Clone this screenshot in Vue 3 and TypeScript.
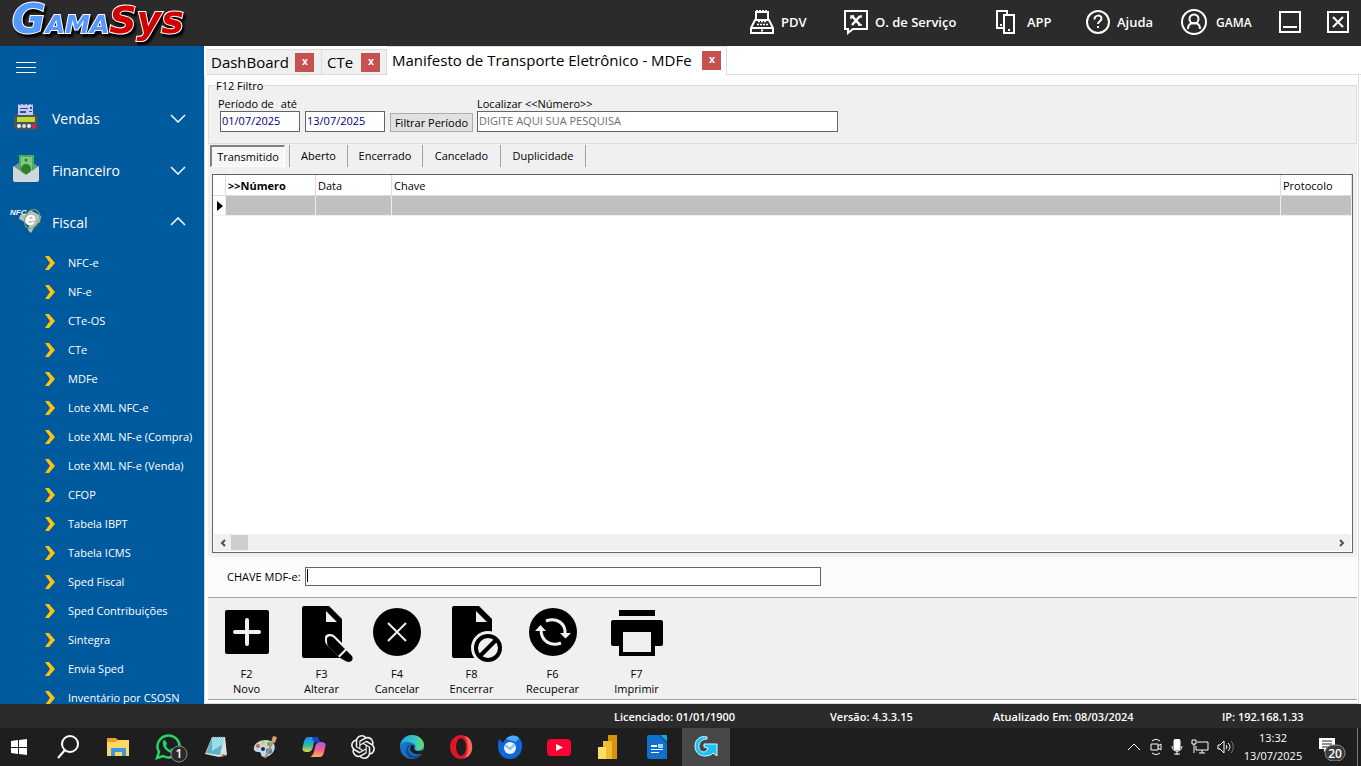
<script setup lang="ts">
import { ref } from 'vue'

interface NavItem { id: string; label: string; width: string }
interface Tool { id: string; key: string; label: string }

const nav: NavItem[] = [
  { id: 'pdv', label: 'PDV', width: 'w-pdv' },
  { id: 'service', label: 'O. de Serviço', width: 'w-service' },
  { id: 'app', label: 'APP', width: 'w-app' },
  { id: 'help', label: 'Ajuda', width: 'w-help' },
  { id: 'user', label: 'GAMA', width: 'w-user' },
]
const groups = [
  { id: 'vendas', label: 'Vendas', open: false },
  { id: 'financeiro', label: 'Financeiro', open: false },
  { id: 'fiscal', label: 'Fiscal', open: true },
]
const links: string[] = [
  'NFC-e', 'NF-e', 'CTe-OS', 'CTe', 'MDFe', 'Lote XML NFC-e', 'Lote XML NF-e (Compra)',
  'Lote XML NF-e (Venda)', 'CFOP', 'Tabela IBPT', 'Tabela ICMS', 'Sped Fiscal',
  'Sped Contribuições', 'Sintegra', 'Envia Sped', 'Inventário por CSOSN',
]
const pages = [
  { label: 'DashBoard', cls: 'tab-dash' },
  { label: 'CTe', cls: 'tab-cte' },
  { label: 'Manifesto de Transporte Eletrônico - MDFe', cls: 'active' },
]
const filters = [
  { label: 'Transmitido', cls: 'pressed' },
  { label: 'Aberto', cls: 'f-aberto' },
  { label: 'Encerrado', cls: 'f-encerrado' },
  { label: 'Cancelado', cls: 'f-cancelado' },
  { label: 'Duplicidade', cls: 'f-duplicidade' },
]
const tools: Tool[] = [
  { id: 'new', key: 'F2', label: 'Novo' },
  { id: 'edit', key: 'F3', label: 'Alterar' },
  { id: 'cancel', key: 'F4', label: 'Cancelar' },
  { id: 'close', key: 'F8', label: 'Encerrar' },
  { id: 'sync', key: 'F6', label: 'Recuperar' },
  { id: 'print', key: 'F7', label: 'Imprimir' },
]
const apps: string[] = [
  'Pesquisar', 'Explorador', 'WhatsApp', 'Bloco de notas', 'Paint', 'Copilot', 'ChatGPT',
  'Edge', 'Opera', 'Thunderbird', 'YouTube', 'Power BI', 'Writer', 'GamaSys',
]
const from = ref('01/07/2025')
const to = ref('13/07/2025')
const search = ref('')
const accessKey = ref('')
</script>

<template>
  <div class="screen">
    <header class="top">
      <svg class="logo" width="200" height="46" viewBox="0 0 200 46" role="img" aria-label="GamaSys">
        <text x="12" y="33"><tspan class="lg">G</tspan><tspan class="la">AMA</tspan><tspan class="ls">Sys</tspan></text>
      </svg>
      <nav class="topnav">
        <button v-for="n in nav" :key="n.id" type="button" :class="['navbtn', n.width]">
          <svg v-if="n.id === 'pdv'" width="26" height="28" viewBox="0 0 26 28" class="line">
            <path d="M7 12V4h12v8M6 12h14l4 8v5H2v-5zM2 20h22" />
            <path d="M7 3h12" stroke-dasharray="2 1" />
            <path d="M9 13.500h9M8 16.500h11" stroke-dasharray="2 1" stroke-width="1.500" />
            <path d="M12 22.500h2" />
          </svg>
          <svg v-else-if="n.id === 'service'" width="26" height="28" viewBox="0 0 26 28" class="line">
            <path d="M2 3h22v18H10l-5 4v-4H2z" />
            <path d="M9 8l8 9M17 8l-8 9" stroke-width="2.500" />
            <path d="M8 11V8h3M15 17h4M18 7v3" stroke-width="1.500" />
          </svg>
          <svg v-else-if="n.id === 'app'" width="26" height="28" viewBox="0 0 26 28" class="line">
            <path d="M8 20H2V3h10v4M9 7h10v18H9z" />
            <path d="M5 17h2M13 22h2" />
          </svg>
          <svg v-else-if="n.id === 'help'" width="26" height="28" viewBox="0 0 26 28" class="line">
            <circle cx="13" cy="14" r="11" />
            <path d="M9.500 11.500c0-5 7-5 7-1 0 3-3.500 2.500-3.500 5.500M13 18v2" />
          </svg>
          <svg v-else width="28" height="28" viewBox="0 0 28 28" class="line">
            <circle cx="14" cy="14" r="12" />
            <circle cx="14" cy="11" r="4.500" />
            <path d="M8 21c0-4 2-6 6-6s6 2 6 6" />
          </svg>
          <span>{{ n.label }}</span>
        </button>
        <button type="button" class="winbtn w-min" aria-label="Minimizar">
          <svg width="22" height="22" viewBox="0 0 22 22" class="line"><path d="M1 1h20v20H1zM4 16h14" /></svg>
        </button>
        <button type="button" class="winbtn" aria-label="Fechar">
          <svg width="22" height="22" viewBox="0 0 22 22" class="line"><path d="M1 1h20v20H1zM6 6l10 10M16 6L6 16" /></svg>
        </button>
      </nav>
    </header>

    <div class="body">
      <aside class="side">
        <button type="button" class="burger" aria-label="Menu"><i></i><i></i><i></i></button>
        <button v-for="g in groups" :key="g.id" type="button" class="group">
          <svg v-if="g.id === 'vendas'" width="32" height="32" viewBox="0 0 32 32">
            <path d="M6 13l3-4h14l3 4v14H4V13z" fill="#455a64" />
            <path d="M4 14h24v12a2 2 0 0 1-2 2H6a2 2 0 0 1-2-2z" fill="#46555e" />
            <path d="M8 2l2 1 2-1 2 1 2-1 2 1 2-1 2 1 1-1v11H8z" fill="#c5cae9" />
            <path d="M10 6h8v1h-8zM10 9h6v2h-6zM19 9h3v1h-3zM20 5h2v2h-2z" fill="#3949ab" />
            <path d="M7 15h18v5H7z" fill="#c6d82e" />
            <circle cx="9" cy="24" r="2" fill="#eee" /><circle cx="14" cy="24" r="2" fill="#ddd" />
            <circle cx="19" cy="24" r="2" fill="#eee" /><circle cx="24" cy="24" r="2" fill="#ff1744" />
          </svg>
          <svg v-else-if="g.id === 'financeiro'" width="32" height="32" viewBox="0 0 32 32">
            <path d="M3 13L16 4l13 9v13H3z" fill="#78909c" />
            <path d="M9 1h15v20H9z" fill="#4caf50" />
            <path d="M11 3h11v15H11z" fill="#81c784" />
            <circle cx="16" cy="15" r="5" fill="#2e7d32" /><circle cx="16" cy="6" r="1.500" fill="#2e7d32" />
            <path d="M3 12l13 9 13-9v14a2 2 0 0 1-2 2H5a2 2 0 0 1-2-2z" fill="#cfd8dc" />
          </svg>
          <svg v-else width="32" height="32" viewBox="0 0 32 32">
            <path d="M10 9l6 0 4-5 4 2 7 4-1 6-5 4-4 7-3-3 1-4-6-5-4-2z" fill="#b9c0c4" />
            <ellipse cx="22" cy="13" rx="7" ry="10" fill="none" stroke="#7cab52" transform="rotate(25 22 13)" />
            <text x="0" y="9" class="nfc">NFC</text>
            <text x="15" y="19" class="nfe">e</text>
          </svg>
          <span>{{ g.label }}</span>
          <svg width="16" height="10" viewBox="0 0 16 10" class="chev">
            <path :d="g.open ? 'M1 8l7-7 7 7' : 'M1 2l7 7 7-7'" />
          </svg>
        </button>
        <a v-for="l in links" :key="l" href="#" class="link">
          <svg width="10" height="14" viewBox="0 0 10 14"><path d="M0 0h4l6 7-6 7H0l5-7z" fill="#ffc20e" /></svg>
          <span>{{ l }}</span>
        </a>
      </aside>

      <main class="work">
        <div class="tabs">
          <div v-for="p in pages" :key="p.label" :class="['tab', p.cls]">
            <span>{{ p.label }}</span>
            <button type="button" :aria-label="'Fechar ' + p.label">
              <svg width="6" height="6" viewBox="0 0 6 6"><path d="M0 0h2l1 2 1-2h2L4 3l2 3H4L3 4 2 6H0l2-3z" fill="#fff" /></svg>
            </button>
          </div>
          <div class="tabs-rest"></div>
        </div>

        <div class="page">
          <fieldset class="filter">
            <legend>F12 Filtro</legend>
            <div class="period">
              <div class="caption"><label for="from">Período de</label><label for="to">até</label></div>
              <div class="fields">
                <input id="from" v-model="from" class="date" type="text" />
                <input id="to" v-model="to" class="date" type="text" />
                <button type="button" class="apply">Filtrar Período</button>
              </div>
            </div>
            <div class="find">
              <label for="find">Localizar &lt;&lt;Número&gt;&gt;</label>
              <input id="find" v-model="search" type="text" placeholder="DIGITE AQUI SUA PESQUISA" />
            </div>
          </fieldset>

          <div class="filters">
            <button v-for="f in filters" :key="f.label" type="button" :class="f.cls">{{ f.label }}</button>
          </div>

          <div class="grid">
            <table>
              <colgroup><col class="c-mark" /><col class="c-num" /><col class="c-date" /><col /><col class="c-prot" /></colgroup>
              <thead>
                <tr><th></th><th class="sorted">&gt;&gt;Número</th><th>Data</th><th>Chave</th><th>Protocolo</th></tr>
              </thead>
              <tbody>
                <tr>
                  <td class="mark"><svg width="6" height="10" viewBox="0 0 6 10"><path d="M0 0l6 5-6 5z" /></svg></td>
                  <td></td><td></td><td></td><td></td>
                </tr>
              </tbody>
            </table>
            <div class="scroll">
              <svg width="6" height="8" viewBox="0 0 6 8"><path d="M5 1L2 4l3 3" /></svg>
              <div class="thumb"></div>
              <svg width="6" height="8" viewBox="0 0 6 8"><path d="M1 1l3 3-3 3" /></svg>
            </div>
          </div>

          <div class="keybar">
            <label for="key">CHAVE MDF-e:</label>
            <div class="keyfield"><input id="key" v-model="accessKey" type="text" /><i class="caret"></i></div>
          </div>

          <div class="tools">
            <button v-for="t in tools" :key="t.id" type="button" :class="'t-' + t.id">
              <svg v-if="t.id === 'new'" width="56" height="56" viewBox="0 0 56 56">
                <rect x="6" y="4" width="44" height="44" rx="2" />
                <path d="M28 14v24M16 26h24" class="cut thick" />
              </svg>
              <svg v-else-if="t.id === 'edit'" width="56" height="56" viewBox="0 0 56 56">
                <path d="M10 0h25l13 13v39H10a2 2 0 0 1-2-2V2a2 2 0 0 1 2-2z" />
                <path d="M32 5v11h11z" class="hole" />
                <path d="M31 32c0-3 2-4 5-4 3 0 4 1 6 3l17 17-8 9-18-18c-2-2-2-4-2-7z" class="hole" />
                <path d="M33 33c0-3 4-4 7-1l11 11-7 7-10-10c-1-2-1-4-1-7zM52.500 44.500l5 5c2 2 1 6-1 6-2 1-4 0-6-1l-5-3z" />
              </svg>
              <svg v-else-if="t.id === 'cancel'" width="56" height="56" viewBox="0 0 56 56">
                <circle cx="28" cy="26" r="24" />
                <path d="M19 17l18 18M37 17L19 35" class="cut" />
              </svg>
              <svg v-else-if="t.id === 'close'" width="56" height="56" viewBox="0 0 56 56">
                <path d="M10 0h25l13 13v39H10a2 2 0 0 1-2-2V2a2 2 0 0 1 2-2z" />
                <path d="M32 5v11h11z" class="hole" />
                <circle cx="44" cy="42" r="17" class="hole" />
                <circle cx="44" cy="42" r="12" class="ring" />
                <path d="M36 50l16-16" class="ring" />
              </svg>
              <svg v-else-if="t.id === 'sync'" width="56" height="56" viewBox="0 0 56 56">
                <circle cx="28" cy="26" r="24" />
                <path d="M21 15c10-4 20 2 19 13M36 37c-10 4-20-2-20-13" class="cut arrows" />
                <path d="M35 27h11l-5.500 5.500zM10 25l5.500-6 5.500 6z" class="hole" />
              </svg>
              <svg v-else width="56" height="56" viewBox="0 0 56 56">
                <path d="M10 4h36v6H10zM4 14h48a2 2 0 0 1 2 2v22a2 2 0 0 1-2 2h-6v10H10V40H4a2 2 0 0 1-2-2V16a2 2 0 0 1 2-2z" />
                <path d="M14 26h28v20H14z" class="hole" />
              </svg>
              <span>{{ t.key }}</span><span>{{ t.label }}</span>
            </button>
          </div>
        </div>
      </main>
    </div>

    <footer class="status">
      <span class="s-lic">Licenciado: 01/01/1900</span>
      <span class="s-ver">Versão: 4.3.3.15</span>
      <span class="s-upd">Atualizado Em: 08/03/2024</span>
      <span class="s-ip">IP: 192.168.1.33</span>
    </footer>

    <div class="taskbar">
      <button type="button" class="start" aria-label="Iniciar">
        <svg width="16" height="16" viewBox="0 0 16 16" fill="#fff"><path d="M0 2l7-1v7H0zM8 1l8-1v8H8zM0 9h7v6l-7-1zM8 9h8v7l-8-1z" /></svg>
      </button>
      <button v-for="(a, i) in apps" :key="a" type="button" :class="['task', { on: a === 'GamaSys' }]" :aria-label="a">
        <svg v-if="i === 0" width="24" height="24" viewBox="0 0 24 24" class="line"><circle cx="13" cy="9" r="8" /><path d="M8 15l-7 8" /></svg>
        <svg v-else-if="i === 1" width="24" height="24" viewBox="0 0 24 24">
          <path d="M1 3h9l2 2h11v16H1z" fill="#e8a317" /><path d="M1 7l9 0 2-2h11v16H1z" fill="#ffd766" />
          <path d="M5 13h15v8h-4v-4H9v4H5z" fill="#3f96dc" />
        </svg>
        <svg v-else-if="i === 2" width="34" height="32" viewBox="0 0 34 32" class="wa">
          <path d="M3 27l2-6a11 11 0 1 1 4 4z" fill="none" stroke="#25d366" stroke-width="2.500" />
          <path d="M9 10c2-2 3 0 4 3l-1 2c1 2 2 3 4 4l2-2c3 1 4 2 2 4-4 3-13-4-11-11z" fill="#25d366" />
          <circle cx="25" cy="23" r="8" fill="#2b2b2b" stroke="#888" />
          <text x="25" y="27" class="badge">1</text>
        </svg>
        <svg v-else-if="i === 3" width="24" height="24" viewBox="0 0 24 24">
          <path d="M8 2h13l2 18-8 2-14-3z" fill="#d9e3e6" /><path d="M8 3h12l-4 17-14-2z" fill="#5db2c6" /><path d="M8 3h12l-2 7-10 6z" fill="#9bdce7" />
          <path d="M8 2h12" stroke="#456" stroke-dasharray="1 1" /><path d="M18 19l5 1-5 2z" fill="#a97c50" />
        </svg>
        <svg v-else-if="i === 4" width="24" height="24" viewBox="0 0 24 24">
          <path d="M1 12c2-7 15-10 20-3 3 6-3 13-10 13-4 0-2-5-5-5s-6-1-5-5z" fill="#b9daf0" />
          <circle cx="5" cy="11" r="2" fill="#e6563a" /><circle cx="10" cy="8" r="2" fill="#f2c230" /><circle cx="16" cy="9" r="2" fill="#67aa50" /><circle cx="16" cy="16" r="3" fill="#3c82cc" /><circle cx="10" cy="14" r="2" fill="#2b2b2b" />
          <path d="M12 23l8-17" stroke="#c98d52" stroke-width="2" /><path d="M18 7l2-6 4 1-2 6z" fill="#d5a069" />
        </svg>
        <svg v-else-if="i === 5" width="24" height="24" viewBox="0 0 24 24">
          <defs>
            <linearGradient id="cpa" x1="0" y1="0" x2="0" y2="1"><stop offset="0" stop-color="#168df0" /><stop offset="0.6" stop-color="#35bd99" /><stop offset="1" stop-color="#f2d33b" /></linearGradient>
            <linearGradient id="cpb" x1="0" y1="0" x2="0" y2="1"><stop offset="0" stop-color="#a65cf0" /><stop offset="0.5" stop-color="#ef5b91" /><stop offset="1" stop-color="#ffad55" /></linearGradient>
          </defs>
          <path d="M6 2h10c-3 1-4 5-5 10-1 4-3 5-6 5-5 0-5-3-4-6 1-5 2-9 5-9z" fill="url(#cpa)" />
          <path d="M18 22H8c3-1 4-5 5-10 1-4 3-5 6-5 5 0 5 3 4 6-1 5-2 9-5 9z" fill="url(#cpb)" />
          <path d="M10 2h4c2 0 3 2 4 5h-4c-1 0-2 1-2 2z" fill="#1647c9" />
        </svg>
        <svg v-else-if="i === 6" width="24" height="24" viewBox="0 0 24 24" fill="#f2f2f2">
          <path d="M22.2819 9.8211a5.9847 5.9847 0 0 0-.5157-4.9108 6.0462 6.0462 0 0 0-6.5098-2.9A6.0651 6.0651 0 0 0 4.9807 4.1818a5.9847 5.9847 0 0 0-3.9977 2.9 6.0462 6.0462 0 0 0 .7427 7.0966 5.98 5.98 0 0 0 .511 4.9107 6.051 6.051 0 0 0 6.5146 2.9001A5.9847 5.9847 0 0 0 13.2599 24a6.0557 6.0557 0 0 0 5.7718-4.2058 5.9894 5.9894 0 0 0 3.9977-2.9001 6.0557 6.0557 0 0 0-.7475-7.0729zm-9.022 12.6081a4.4755 4.4755 0 0 1-2.8764-1.0408l.1419-.0804 4.7783-2.7582a.7948.7948 0 0 0 .3927-.6813v-6.7369l2.02 1.1686a.071.071 0 0 1 .038.052v5.5826a4.504 4.504 0 0 1-4.4945 4.4944zm-9.6607-4.1254a4.4708 4.4708 0 0 1-.5346-3.0137l.142.0852 4.783 2.7582a.7712.7712 0 0 0 .7806 0l5.8428-3.3685v2.3324a.0804.0804 0 0 1-.0332.0615L9.74 19.9502a4.4992 4.4992 0 0 1-6.1408-1.6464zM2.3408 7.8956a4.485 4.485 0 0 1 2.3655-1.9728V11.6a.7664.7664 0 0 0 .3879.6765l5.8144 3.3543-2.0201 1.1685a.0757.0757 0 0 1-.071 0l-4.8303-2.7865A4.504 4.504 0 0 1 2.3408 7.872zm16.5963 3.8558L13.1038 8.364 15.1192 7.2a.0757.0757 0 0 1 .071 0l4.8303 2.7913a4.4944 4.4944 0 0 1-.6765 8.1042v-5.6772a.79.79 0 0 0-.407-.667zm2.0107-3.0231l-.142-.0852-4.7735-2.7818a.7759.7759 0 0 0-.7854 0L9.409 9.2297V6.8974a.0662.0662 0 0 1 .0284-.0615l4.8303-2.7866a4.4992 4.4992 0 0 1 6.6802 4.66zM8.3065 12.863l-2.02-1.1638a.0804.0804 0 0 1-.038-.0567V6.0742a4.4992 4.4992 0 0 1 7.3757-3.4537l-.142.0805L8.704 5.459a.7948.7948 0 0 0-.3927.6813zm1.0976-2.3654l2.602-1.4998 2.6069 1.4998v2.9994l-2.5974 1.4997-2.6067-1.4997Z" />
        </svg>
        <svg v-else-if="i === 7" width="24" height="24" viewBox="0 0 24 24">
          <defs><linearGradient id="edg" x1="0" y1="0" x2="1" y2="0"><stop offset="0" stop-color="#229de0" /><stop offset="0.6" stop-color="#35c6ce" /><stop offset="1" stop-color="#67df55" /></linearGradient></defs>
          <circle cx="12" cy="12" r="12" fill="#1673c8" />
          <path d="M0 11C1 4 6 0 12 0c7 0 12 5 12 10 0 6-8 7-9 4 1-2 1-5-3-6C7 6 2 7 0 11z" fill="url(#edg)" />
          <path d="M10 10c-5 6 1 13 11 10-6 6-14 4-15-3-1-5 3-8 6-8z" fill="#104a91" />
          <path d="M12 10c2 0 3 2 2 4 1 2 6 3 10 1v2l-3 2c-5 1-11-1-11-5 0-2 1-4 2-4z" fill="#1e1e1e" />
        </svg>
        <svg v-else-if="i === 8" width="24" height="24" viewBox="0 0 24 24">
          <ellipse cx="12" cy="12" rx="11" ry="12" fill="#df1525" /><path d="M15 1c11 1 11 21 0 22 5-3 5-19 0-22z" fill="#ff6560" />
          <ellipse cx="12" cy="12" rx="5" ry="9" fill="#1e1e1e" />
        </svg>
        <svg v-else-if="i === 9" width="24" height="24" viewBox="0 0 24 24">
          <path d="M1 4l4 4C8 1 18-1 22 4l2 4c1 9-4 16-12 16C2 24-2 14 1 4z" fill="#1267d8" /><path d="M8 4c4-5 11-4 13-1l-3 4z" fill="#46adff" />
          <ellipse cx="12" cy="13" rx="6" ry="6" fill="#e8f3ff" /><path d="M7 10l5 4 5-5" fill="none" stroke="#8dbde9" stroke-width="2" />
        </svg>
        <svg v-else-if="i === 10" width="24" height="24" viewBox="0 0 24 24"><rect y="4" width="24" height="17" rx="4" fill="#ff0033" /><path d="M9 9l7 3.500L9 16z" fill="#fff" /></svg>
        <svg v-else-if="i === 11" width="24" height="24" viewBox="0 0 24 24"><path d="M12 0h9v24h-9z" fill="#d89212" /><path d="M7 6h9v18H7z" fill="#eebc2f" /><path d="M2 12h8v12H2z" fill="#ffdd68" /></svg>
        <svg v-else-if="i === 12" width="24" height="24" viewBox="0 0 24 24">
          <path d="M4 0h10l8 8v16H4a2 2 0 0 1-2-2V2a2 2 0 0 1 2-2z" fill="#126fca" /><path d="M15 0h7v7z" fill="#15a6e8" />
          <path d="M6 10h6v2H6zM6 14h12v1H6zM6 17h8v1H6z" fill="#fff" /><path d="M13 9h5v4h-5z" fill="#9bd4ff" />
        </svg>
        <svg v-else width="24" height="24" viewBox="0 0 24 24">
          <path d="M13 2C6 0 1 5 1 11c0 7 5 10 10 10 4 0 6-1 8-3l4 3V9H10v3l4 1c-1 3-3 4-5 4-6-1-6-13 4-13z" fill="#17c3f7" stroke="#d8f6ff" />
        </svg>
      </button>
      <div class="tray">
        <svg width="14" height="8" viewBox="0 0 14 8" class="thin"><path d="M1 7l6-6 6 6" /></svg>
        <svg width="14" height="16" viewBox="0 0 14 16" class="thin"><path d="M3 2c3-2 5-2 8 0M3 14c3 2 5 2 8 0M2 5h7v6H2zM9 7l3-2v6L9 9" /></svg>
        <svg width="12" height="16" viewBox="0 0 12 16" class="thin"><rect x="3" y="0" width="6" height="11" rx="2" fill="#fff" /><path d="M1 7c0 7 10 7 10 0M6 12v4M3 15h6" /></svg>
        <svg width="18" height="16" viewBox="0 0 18 16" class="thin"><path d="M6 3h11v8H5V7M8 14h6M11 11v3M1 1h4v4H1zM3 5v9" /></svg>
        <svg width="18" height="14" viewBox="0 0 18 14" class="thin"><path d="M1 5h2l4-4v12L3 9H1zM9 5c1 1 1 3 0 4M11 3c3 3 2 6 0 8" /><path d="M14 1c3 4 3 8 0 12" stroke="#777" /></svg>
        <div class="clock"><time>13:32</time><time>13/07/2025</time></div>
        <button type="button" class="notes" aria-label="Notificações">
          <svg width="28" height="28" viewBox="0 0 28 28">
            <path d="M0 5h16v11H8l-3 3v-3H0z" fill="#fff" /><path d="M3 8h10M3 11h10M3 14h7" stroke="#222" />
            <rect x="6" y="12" width="20" height="16" rx="8" fill="#3a3a3a" stroke="#888" /><text x="16" y="25" class="badge">20</text>
          </svg>
        </button>
      </div>
    </div>
  </div>
</template>

<style>
body { margin: 0; overflow: hidden; }
</style>

<style scoped>
* { box-sizing: border-box; }
.screen { height: 100vh; display: flex; flex-direction: column; overflow: hidden; font-family: "Open Sans", "Noto Sans", sans-serif; font-size: 11px; line-height: 15px; color: #000; background: #f0f0f0; }
button, input { font: inherit; color: inherit; margin: 0; }
button { background: none; border: 0; padding: 0; white-space: nowrap; }
svg { display: block; flex: none; }
.line { fill: none; stroke: #fff; stroke-width: 2; }
.thin { fill: none; stroke: #fff; stroke-width: 1; }

.top { height: 46px; flex: none; display: flex; justify-content: space-between; background: #2b2b2b; color: #fff; }
.logo { overflow: visible; }
.logo text { font-family: "DejaVu Sans", sans-serif; font-weight: bold; font-style: italic; stroke: #fff; stroke-width: 2px; paint-order: stroke; filter: drop-shadow(2px 3px 1px #000); }
.lg { font-size: 41px; fill: #5599ff; }
.la { font-size: 25px; fill: #5599ff; }
.ls { font-size: 38px; fill: #d40000; }
.topnav { display: flex; align-items: center; padding: 0 12px 2px 0; font-size: 13px; font-weight: 600; }
.navbtn { display: flex; align-items: center; gap: 6px; }
.w-pdv { width: 94px; }
.w-service { width: 152px; }
.w-app { width: 90px; }
.w-help { width: 95px; }
.w-user { width: 99px; gap: 8px; font-size: 12px; }
.w-min { width: 48px; }

.body { flex: 1; min-height: 0; display: flex; }
.side { width: 204px; flex: none; overflow: hidden; background: #005a9e; color: #fff; display: flex; flex-direction: column; }
.burger { height: 46px; flex: none; padding: 16px; display: flex; flex-direction: column; gap: 4px; }
.burger i { width: 20px; height: 1px; background: #fff; }
.group { height: 52px; flex: none; display: flex; align-items: center; padding: 0 18px 0 10px; gap: 10px; font-size: 14px; text-align: left; }
.group span { flex: 1; }
.chev { fill: none; stroke: #fff; stroke-width: 1.5; }
.nfc { font: italic bold 8px "Liberation Sans", sans-serif; fill: #fff; }
.nfe { font: italic bold 19px "Liberation Sans", sans-serif; fill: #fff; }
.link { height: 29px; flex: none; display: flex; align-items: center; gap: 13px; padding-left: 45px; color: #fff; text-decoration: none; white-space: nowrap; }

.work { flex: 1; min-width: 0; display: flex; flex-direction: column; background: #fff; }
.tabs { height: 29px; flex: none; display: flex; align-items: flex-end; padding-left: 2px; font-size: 15px; line-height: 20px; }
.tab { height: 26px; display: flex; align-items: center; justify-content: space-between; padding: 0 6px 0 5px; background: #f0f0f0; border: 1px solid #dcdcdc; border-left: 0; white-space: nowrap; }
.tab button { width: 19px; height: 19px; flex: none; display: flex; align-items: center; justify-content: center; background: #c75050; }
.tab.tab-dash { width: 116px; padding-right: 7px; }
.tab-cte { width: 65px; }
.tab.active { width: 340px; height: 29px; padding: 0 5px 2px; background: #fff; border-bottom: 0; }
.tabs-rest { flex: 1; height: 29px; border-bottom: 1px solid #dcdcdc; }

.page { flex: 1; min-height: 0; display: flex; flex-direction: column; margin-right: 2px; padding: 3px 1px 3px 3px; border: 1px solid #dcdcdc; border-top: 0; }
.filter { display: flex; align-items: flex-start; gap: 4px; margin: 0; padding: 3px 0 11px 9px; min-width: 0; border: 1px solid #dcdcdc; background: #f0f0f0; }
.filter legend { padding: 0 1px; margin-left: -3px; }
.caption { display: flex; gap: 7px; }
.fields { display: flex; align-items: flex-end; gap: 5px; padding-left: 2px; }
.filter input { display: block; height: 21px; padding: 0 1px 2px; background: #fff; border: 1px solid #646464; border-radius: 0; outline: 0; }
.filter .date { width: 80px; color: #000080; }
.apply { width: 83px; height: 19px; background: #e1e1e1; border: 1px solid #adadad; }
.find { flex: 1; max-width: 361px; }
.find label { display: block; }
.find input { width: 100%; }
.find input::placeholder { color: #6d6d6d; opacity: 1; }

.filters { height: 30px; flex: none; display: flex; padding: 1px 0 0 2px; background: #f0f0f0; }
.filters button { height: 22px; padding-bottom: 2px; border-right: 1px solid #a0a0a0; }
.filters .pressed { width: 75px; padding: 0; margin-right: 5px; border: 1px solid #fff; border-top: 2px solid #808080; border-left: 2px solid #808080; background: repeating-conic-gradient(#fff 0 25%, #f0f0f0 0 50%) 0 0 / 2px 2px; }
.f-aberto { width: 58px; box-shadow: -1px 0 #a0a0a0; }
.f-encerrado { width: 75px; }
.f-cancelado { width: 78px; }
.f-duplicidade { width: 85px; }

.grid { flex: 1; min-height: 0; display: flex; flex-direction: column; justify-content: space-between; margin: 0 4px; border: 1px solid #646464; background: #fff; box-shadow: 0 0 0 4px #f0f0f0; }
.grid table { width: 100%; table-layout: fixed; border-collapse: separate; border-spacing: 0; }
.c-mark { width: 13px; }
.c-num { width: 90px; }
.c-date { width: 76px; }
.c-prot { width: 71px; }
th, td { height: 20px; padding: 0 2px; border-right: 1px solid #dcdcdc; border-bottom: 1px solid #dcdcdc; text-align: left; font-weight: 400; }
th { height: 21px; }
th.sorted { font-weight: 700; }
td { background: #c0c0c0; border-color: #f0f0f0; }
td.mark { background: #fff; padding-left: 4px; }
.scroll { height: 17px; display: flex; align-items: center; padding: 0 6px; margin: 0 1px 1px; background: #f0f0f0; }
.scroll svg { fill: none; stroke: #505050; stroke-width: 2; }
.scroll svg:last-child { margin-left: auto; }
.thumb { width: 17px; height: 15px; margin-left: 5px; background: #cdcdcd; }

.keybar { height: 41px; flex: none; display: flex; align-items: center; gap: 4px; padding: 0 0 2px 19px; margin-top: 4px; border-bottom: 1px solid #a0a0a0; background: #fbfbfb; }
.keyfield { position: relative; flex: 1; max-width: 516px; }
.keyfield input { display: block; width: 100%; height: 19px; background: #fff; border: 1px solid #646464; outline: 0; }
.caret { position: absolute; left: 2px; top: 2px; width: 1px; height: 13px; background: #000; }

.tools { height: 102px; flex: none; display: flex; align-items: flex-start; padding: 8px 0 0 2px; background: #f0f0f0; border-bottom: 1px solid #a0a0a0; }
.tools button { display: flex; flex-direction: column; align-items: center; }
.tools svg { overflow: visible; }
.tools span:nth-of-type(1) { margin-top: 4px; }
.t-new { width: 73px; }
.t-edit { width: 77px; }
.t-cancel { width: 74px; }
.t-close { width: 75px; }
.t-sync { width: 87px; }
.t-print { width: 81px; }
.hole { fill: #f0f0f0; }
.cut { fill: none; stroke: #f0f0f0; stroke-width: 2; }
.thick { stroke-width: 4; stroke-linecap: round; }
.arrows { stroke-width: 3; }
.ring { fill: none; stroke: #000; stroke-width: 4; }

.status { height: 24px; flex: none; display: flex; justify-content: flex-end; align-items: center; background: #2b2b2b; color: #fff; font-size: 11px; font-weight: 600; white-space: nowrap; }
.s-lic { width: 216px; }
.s-ver { width: 163px; }
.s-upd { width: 229px; }
.s-ip { width: 139px; }

.taskbar { height: 38px; flex: none; display: flex; align-items: center; gap: 1px; background: #1e1e1e; color: #fff; }
.start { width: 37px; margin-right: 7px; display: flex; justify-content: center; }
.task { width: 48px; height: 38px; flex: none; display: flex; align-items: center; justify-content: center; }
.task.on { background: #484848; }
.wa { margin-left: 8px; }
.badge { font: 600 12px "Open Sans", sans-serif; fill: #fff; text-anchor: middle; }
.tray { margin-left: auto; display: flex; align-items: center; gap: 8px; }
.clock { width: 60px; display: flex; flex-direction: column; align-items: center; line-height: 18px; font-size: 11px; }
.notes { width: 47px; height: 38px; display: flex; align-items: center; padding-left: 8px; margin-right: 3px; border-right: 1px solid #777; }
</style>
